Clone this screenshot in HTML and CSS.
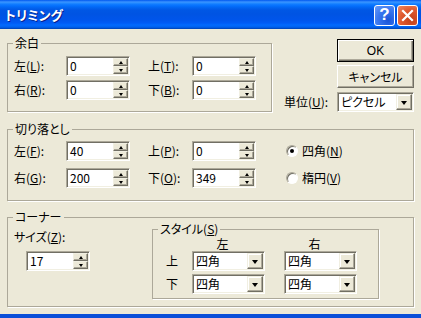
FILE: index.html
```html
<!DOCTYPE html>
<html lang="ja">
<head>
  <meta charset="UTF-8" />
  <title>トリミング</title>
  <link rel="stylesheet" href="styles.css">
</head>
<body>
<div class="window">

  <!-- TITLE BAR -->
  <div class="titlebar">
    <span class="title">トリミング</span>
    <div class="caption-btns">
      <span class="cap-btn help">?</span>
      <span class="cap-btn close">
        <svg width="13" height="13" viewBox="0 0 13 13"><path d="M2 2 L11 11 M11 2 L2 11" stroke="#fff" stroke-width="2.2" stroke-linecap="square"/></svg>
      </span>
    </div>
  </div>

  <div class="client">

    <div class="top-row">
      <!-- 余白 -->
      <fieldset class="group group-margin">
        <legend>余白</legend>
        <div class="field-grid">
          <span class="lbl">左(<u>L</u>):</span>
          <div class="spin"><span class="val">0</span><span class="spin-btns"><i class="sbtn"><b class="tri-up"></b></i><i class="sbtn"><b class="tri-down"></b></i></span></div>
          <span class="lbl lbl2">上(<u>T</u>):</span>
          <div class="spin"><span class="val">0</span><span class="spin-btns"><i class="sbtn"><b class="tri-up"></b></i><i class="sbtn"><b class="tri-down"></b></i></span></div>

          <span class="lbl">右(<u>R</u>):</span>
          <div class="spin"><span class="val">0</span><span class="spin-btns"><i class="sbtn"><b class="tri-up"></b></i><i class="sbtn"><b class="tri-down"></b></i></span></div>
          <span class="lbl lbl2">下(<u>B</u>):</span>
          <div class="spin"><span class="val">0</span><span class="spin-btns"><i class="sbtn"><b class="tri-up"></b></i><i class="sbtn"><b class="tri-down"></b></i></span></div>
        </div>
      </fieldset>

      <!-- buttons -->
      <div class="side">
        <div class="btn btn-default">OK</div>
        <div class="btn">キャンセル</div>
        <div class="unit-row">
          <span class="lbl">単位(<u>U</u>):</span>
          <div class="combo combo-unit"><span class="val">ピクセル</span><span class="drop"><b class="tri-down big"></b></span></div>
        </div>
      </div>
    </div>

    <!-- 切り落とし -->
    <fieldset class="group group-crop">
      <legend>切り落とし</legend>
      <div class="field-grid crop-grid">
        <span class="lbl">左(<u>F</u>):</span>
        <div class="spin"><span class="val">40</span><span class="spin-btns"><i class="sbtn"><b class="tri-up"></b></i><i class="sbtn"><b class="tri-down"></b></i></span></div>
        <span class="lbl lbl2">上(<u>P</u>):</span>
        <div class="spin"><span class="val">0</span><span class="spin-btns"><i class="sbtn"><b class="tri-up"></b></i><i class="sbtn"><b class="tri-down"></b></i></span></div>
        <label class="radio"><span class="dot checked"></span><span>四角(<u>N</u>)</span></label>

        <span class="lbl">右(<u>G</u>):</span>
        <div class="spin"><span class="val">200</span><span class="spin-btns"><i class="sbtn"><b class="tri-up"></b></i><i class="sbtn"><b class="tri-down"></b></i></span></div>
        <span class="lbl lbl2">下(<u>O</u>):</span>
        <div class="spin"><span class="val">349</span><span class="spin-btns"><i class="sbtn"><b class="tri-up"></b></i><i class="sbtn"><b class="tri-down"></b></i></span></div>
        <label class="radio"><span class="dot"></span><span>楕円(<u>V</u>)</span></label>
      </div>
    </fieldset>

    <!-- コーナー -->
    <fieldset class="group group-corner">
      <legend>コーナー</legend>
      <div class="corner-body">
        <div class="size-col">
          <span class="lbl">サイズ(<u>Z</u>):</span>
          <div class="spin size-spin"><span class="val">17</span><span class="spin-btns"><i class="sbtn"><b class="tri-up"></b></i><i class="sbtn"><b class="tri-down"></b></i></span></div>
        </div>

        <fieldset class="group group-style">
          <legend>スタイル(<u>S</u>)</legend>
          <div class="style-grid">
            <span></span>
            <span class="head">左</span>
            <span class="head">右</span>

            <span class="lbl">上</span>
            <div class="combo"><span class="val">四角</span><span class="drop"><b class="tri-down big"></b></span></div>
            <div class="combo"><span class="val">四角</span><span class="drop"><b class="tri-down big"></b></span></div>

            <span class="lbl">下</span>
            <div class="combo"><span class="val">四角</span><span class="drop"><b class="tri-down big"></b></span></div>
            <div class="combo"><span class="val">四角</span><span class="drop"><b class="tri-down big"></b></span></div>
          </div>
        </fieldset>
      </div>
    </fieldset>

  </div>
</div>
</body>
</html>
```

FILE: styles.css
```css
/* Global */
* { box-sizing: border-box; margin: 0; padding: 0; }

body {
  width: 421px;
  height: 318px;
  overflow: hidden;
  background-color: #ece9d8;
  font-family: "Noto Sans CJK JP", "Liberation Sans", sans-serif;
  font-size: 12px;
  line-height: 14px;
  font-feature-settings: "palt";
  color: #000;
}

u { text-decoration: underline; text-underline-offset: 1px; }

.window {
  width: 421px;
  height: 318px;
  display: flex;
  flex-direction: column;
}

/* Title bar */
.titlebar {
  height: 29px;
  display: flex;
  align-items: center;
  justify-content: space-between;
  padding: 1px 3px 0 5px;
  background: linear-gradient(to bottom,
    #0058ee 0px, #3a93ff 2px, #288eff 3px, #127dff 4px, #036ffc 6px,
    #0262ee 8px, #0057e5 10px, #0054e3 14px, #0055eb 20px, #005bf5 23px,
    #026afe 25px, #0062ef 27px, #0052d6 28px, #0040ab 29px);
}

.title {
  color: #fff;
  font-weight: bold;
  font-size: 13px;
  text-shadow: 1px 1px 0 #0a1e8a;
}

.caption-btns { display: flex; gap: 2px; }

.cap-btn {
  width: 21px;
  height: 21px;
  border: 1px solid #fff;
  border-radius: 3px;
  display: flex;
  align-items: center;
  justify-content: center;
}

.help {
  background: radial-gradient(circle at 70% 75%, #1b55d8 0%, #3a78f0 55%, #6a9cf8 100%);
  color: #fff;
  font-family: "Liberation Sans", sans-serif;
  font-weight: bold;
  font-size: 17px;
}

.close {
  background: radial-gradient(circle at 70% 75%, #c2401a 0%, #e05a30 55%, #ef8a62 100%);
}

/* Client area */
.client {
  flex: 1;
  padding: 7px 7px 0 7px;
  border-bottom: 4px solid #0a4fd9;
  display: flex;
  flex-direction: column;
}

.top-row {
  display: flex;
  gap: 12px;
}

/* Group boxes */
.group {
  border: 1px solid #aca899;
  box-shadow: 1px 1px 0 #fff;
  padding: 6px 6px 6px 6px;
}

.group legend {
  margin-left: -1px;
  padding: 0 2px;
  line-height: 14px;
}

.group-margin { width: 265px; }

.group-crop {
  margin-top: 10px;
  padding: 5px 6px 12px 6px;
}

.group-corner {
  margin-top: 9px;
  padding: 0 6px 7px 6px;
}

/* Label + spin grid */
.field-grid {
  display: grid;
  grid-template-columns: 52px 64px 62px 64px;
  grid-auto-rows: 20px;
  row-gap: 4px;
  align-items: center;
}

.crop-grid {
  grid-template-columns: 52px 64px 62px 64px 30px auto;
  row-gap: 7px;
}

.lbl2 { margin-left: 18px; }

.crop-grid .radio { grid-column: 6; }

/* Sunken edit box */
.spin,
.combo {
  height: 20px;
  display: flex;
  background-color: #fff;
  border: 1px solid;
  border-color: #aca899 #fff #fff #aca899;
  box-shadow: inset 1px 1px 0 #716f64, inset -1px -1px 0 #f1efe2;
  padding: 1px;
}

.spin { width: 64px; }

.spin .val,
.combo .val {
  flex: 1;
  padding-left: 2px;
  line-height: 16px;
}

.spin-btns {
  width: 15px;
  display: flex;
  flex-direction: column;
}

.sbtn {
  flex: 1;
  display: flex;
  align-items: center;
  justify-content: center;
  background-color: #ece9d8;
  border: 1px solid;
  border-color: #f1efe2 #716f64 #716f64 #f1efe2;
  box-shadow: inset -1px -1px 0 #aca899;
}

.tri-up,
.tri-down {
  width: 0;
  height: 0;
  border-left: 2.5px solid transparent;
  border-right: 2.5px solid transparent;
}
.tri-up { border-bottom: 3px solid #000; }
.tri-down { border-top: 3px solid #000; }

.tri-down.big {
  border-left-width: 3.5px;
  border-right-width: 3.5px;
  border-top-width: 4px;
  margin-top: 1px;
}

/* Combo box */
.drop {
  width: 16px;
  display: flex;
  align-items: center;
  justify-content: center;
  background-color: #ece9d8;
  border: 1px solid;
  border-color: #f1efe2 #716f64 #716f64 #f1efe2;
  box-shadow: inset -1px -1px 0 #aca899, inset 1px 1px 0 #fff;
}

/* Side buttons */
.side {
  width: 130px;
  display: flex;
  flex-direction: column;
  align-items: flex-end;
  padding-top: 3px;
}

.btn {
  width: 77px;
  height: 23px;
  display: flex;
  align-items: center;
  justify-content: center;
  background-color: #ece9d8;
  border: 1px solid;
  border-color: #fff #716f64 #716f64 #fff;
  box-shadow: inset -1px -1px 0 #aca899;
  margin-bottom: 3px;
}

.btn-default {
  border: 1px solid #000;
  box-shadow: inset 1px 1px 0 #fff, inset -1px -1px 0 #716f64, inset -2px -2px 0 #aca899;
  font-family: "Liberation Sans", sans-serif;
}

.unit-row {
  width: 100%;
  display: flex;
  align-items: center;
  justify-content: space-between;
  margin-top: 1px;
}

.combo-unit { width: 77px; }

/* Radio buttons */
.radio {
  display: flex;
  align-items: center;
  gap: 4px;
}

.dot {
  width: 12px;
  height: 12px;
  border-radius: 50%;
  background-color: #fff;
  border: 1px solid;
  border-color: #aca899 #fff #fff #aca899;
  box-shadow: inset 1px 1px 0 #716f64;
  display: flex;
  align-items: center;
  justify-content: center;
}

.dot.checked::after {
  content: "";
  width: 4px;
  height: 4px;
  border-radius: 50%;
  background-color: #000;
}

/* Corner group */
.corner-body {
  display: flex;
}

.size-col {
  width: 138px;
  padding-top: 6px;
  display: flex;
  flex-direction: column;
  align-items: flex-start;
}

.size-spin {
  margin: 7px 0 0 12px;
}

.group-style {
  width: 227px;
  margin-top: -2px;
  padding: 0 13px 6px 13px;
}

.group-style legend { margin-left: -8px; }

.style-grid {
  display: grid;
  grid-template-columns: 26px 92px 73px;
  grid-template-rows: 14px 20px 20px;
  row-gap: 1px;
  align-items: center;
}

.style-grid .combo { width: 73px; }
.style-grid > :nth-child(n+7) { margin-top: 4px; }

.head {
  width: 73px;
  text-align: center;
  padding-right: 12px;
  padding-top: 2px;
}
```
